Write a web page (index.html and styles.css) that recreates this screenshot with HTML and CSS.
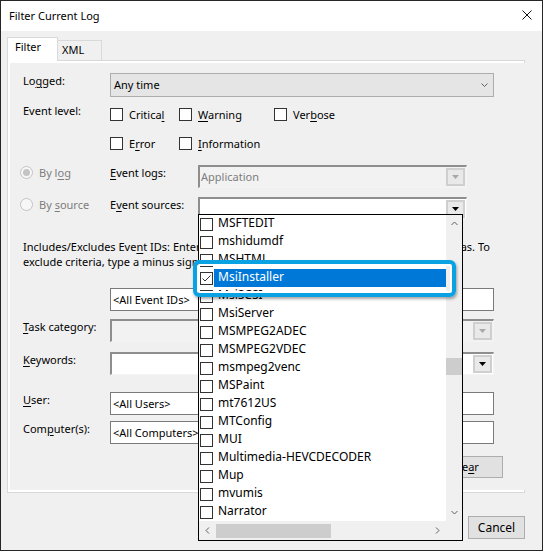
FILE: index.html
```html
<!DOCTYPE html>
<html>
<head>
<meta charset="utf-8">
<title>Filter Current Log</title>
<link rel="stylesheet" href="styles.css">
</head>
<body>
<div class="window">
  <div class="titlebar">
    <span class="title">Filter Current Log</span>
    <svg class="close" width="10" height="10" viewBox="0 0 10 10"><path d="M0.5 0.5L9.5 9.5M9.5 0.5L0.5 9.5" stroke="#111" stroke-width="1" fill="none"/></svg>
  </div>
  <div class="client">
    <div class="tabs">
      <div class="tab tab-active">Filter</div>
      <div class="tab tab-xml">XML</div>
    </div>
    <div class="page">
      <div class="panel">
        <div class="row row-logged">
          <div class="label">Lo<u>g</u>ged:</div>
          <div class="select"><span class="select-text">Any time</span>
            <svg class="chev" width="7" height="5" viewBox="0 0 7 5"><path d="M0.5 0.5L3.5 3.5L6.5 0.5" stroke="#606060" fill="none"/></svg>
          </div>
        </div>
        <div class="row row-level1">
          <div class="label">Event level:</div>
          <div class="checks">
            <div class="check w1"><span class="box"></span><span>Critica<u>l</u></span></div>
            <div class="check w2"><span class="box"></span><span><u>W</u>arning</span></div>
            <div class="check"><span class="box"></span><span>Ver<u>b</u>ose</span></div>
          </div>
        </div>
        <div class="row row-level2">
          <div class="checks indent">
            <div class="check w1"><span class="box"></span><span>E<u>r</u>ror</span></div>
            <div class="check w2"><span class="box"></span><span><u>I</u>nformation</span></div>
          </div>
        </div>
        <div class="row row-bylog">
          <div class="radio-group"><span class="radio on"></span><span class="dim">By l<u>o</u>g</span></div>
          <div class="label2"><u>E</u>vent logs:</div>
          <div class="combo combo-disabled"><span class="combo-text dim">Application</span>
            <span class="cbtn"><svg width="7" height="4" viewBox="0 0 7 4"><path d="M0 0H7L3.5 4Z" fill="#a8a8a8"/></svg></span>
          </div>
        </div>
        <div class="row row-bysource">
          <div class="radio-group"><span class="radio"></span><span class="dim">By <u>s</u>ource</span></div>
          <div class="label2">E<u>v</u>ent sources:</div>
          <div class="combo"><span class="combo-text"></span>
            <span class="cbtn"><svg width="7" height="4" viewBox="0 0 7 4"><path d="M0 0H7L3.5 4Z" fill="#000"/></svg></span>
          </div>
        </div>
        <div class="desc">Includes/Excludes Eve<u>n</u>t IDs: Enter ID numbers and/or ID ranges separated by commas. To<br>exclude criteria, type a minus sign first. For example 1,3,5-99,-76</div>
        <div class="row row-ids">
          <div class="label"></div>
          <div class="input">&lt;All Event IDs&gt;</div>
        </div>
        <div class="row row-task">
          <div class="label"><u>T</u>ask category:</div>
          <div class="combo combo-wide combo-disabled"><span class="combo-text"></span>
            <span class="cbtn"><svg width="7" height="4" viewBox="0 0 7 4"><path d="M0 0H7L3.5 4Z" fill="#a8a8a8"/></svg></span>
          </div>
        </div>
        <div class="row row-keys">
          <div class="label"><u>K</u>eywords:</div>
          <div class="combo combo-wide"><span class="combo-text"></span>
            <span class="cbtn"><svg width="7" height="4" viewBox="0 0 7 4"><path d="M0 0H7L3.5 4Z" fill="#000"/></svg></span>
          </div>
        </div>
        <div class="row row-user">
          <div class="label"><u>U</u>ser:</div>
          <div class="input">&lt;All Users&gt;</div>
        </div>
        <div class="row row-comp">
          <div class="label">Com<u>p</u>uter(s):</div>
          <div class="input">&lt;All Computers&gt;</div>
        </div>
        <div class="row row-clear">
          <div class="btn btn-clear">Cle<u>a</u>r</div>
        </div>
      </div>
    </div>
    <div class="buttons">
      <div class="btn btn-ok">OK</div>
      <div class="btn btn-cancel">Cancel</div>
    </div>
  </div>

  <div class="dropdown">
    <div class="items">
      <div class="item"><span class="cb"></span><span class="txt">MSFTEDIT</span></div>
      <div class="item"><span class="cb"></span><span class="txt">mshidumdf</span></div>
      <div class="item"><span class="cb"></span><span class="txt">MSHTML</span></div>
      <div class="item item-sel"><span class="cb"><svg width="11" height="11" viewBox="0 0 11 11"><path d="M1.5 5.5L4 8L9.5 2.5" stroke="#333" fill="none"/></svg></span><span class="txt">MsiInstaller</span></div>
      <div class="item"><span class="cb"></span><span class="txt">MsiSCSI</span></div>
      <div class="item"><span class="cb"></span><span class="txt">MsiServer</span></div>
      <div class="item"><span class="cb"></span><span class="txt">MSMPEG2ADEC</span></div>
      <div class="item"><span class="cb"></span><span class="txt">MSMPEG2VDEC</span></div>
      <div class="item"><span class="cb"></span><span class="txt">msmpeg2venc</span></div>
      <div class="item"><span class="cb"></span><span class="txt">MSPaint</span></div>
      <div class="item"><span class="cb"></span><span class="txt">mt7612US</span></div>
      <div class="item"><span class="cb"></span><span class="txt">MTConfig</span></div>
      <div class="item"><span class="cb"></span><span class="txt">MUI</span></div>
      <div class="item"><span class="cb"></span><span class="txt">Multimedia-HEVCDECODER</span></div>
      <div class="item"><span class="cb"></span><span class="txt">Mup</span></div>
      <div class="item"><span class="cb"></span><span class="txt">mvumis</span></div>
      <div class="item"><span class="cb"></span><span class="txt">Narrator</span></div>
    </div>
    <div class="vscroll">
      <div class="sbtn"><svg width="7" height="5" viewBox="0 0 7 5"><path d="M0.5 4L3.5 1L6.5 4" stroke="#606060" fill="none"/></svg></div>
      <div class="vtrack"><div class="vthumb"></div></div>
      <div class="sbtn"><svg width="7" height="5" viewBox="0 0 7 5"><path d="M0.5 1L3.5 4L6.5 1" stroke="#606060" fill="none"/></svg></div>
    </div>
    <div class="hscroll">
      <div class="sbtn"><svg width="5" height="7" viewBox="0 0 5 7"><path d="M4 0.5L1 3.5L4 6.5" stroke="#606060" fill="none"/></svg></div>
      <div class="htrack"><div class="hthumb"></div></div>
      <div class="sbtn"><svg width="5" height="7" viewBox="0 0 5 7"><path d="M1 0.5L4 3.5L1 6.5" stroke="#606060" fill="none"/></svg></div>
    </div>
    <div class="corner"></div>
  </div>
  <div class="callout"></div>
</div>
</body>
</html>
```
FILE: styles.css
```css
* { box-sizing: border-box; }
html, body { margin: 0; padding: 0; }
body {
  width: 543px; height: 551px; overflow: hidden;
  font-family: "Noto Sans", "Segoe UI", sans-serif;
  font-size: 11px; color: #000; background: #fff;
}
u { text-decoration: underline; text-underline-offset: 2px; }

.window {
  position: relative;
  width: 543px; height: 551px;
  border: 1px solid #262626;
  background: #f0f0f0;
  display: flex; flex-direction: column;
}
.titlebar {
  height: 30px; background: #fff;
  display: flex; align-items: flex-start;
  padding: 7px 0 0 8px;
}
.title { flex: 1; line-height: 16px; }
.close { margin: 2px 10px 0 0; }

.client { flex: 1; display: flex; flex-direction: column; padding: 6px 17px 0 6px; }

.tabs { display: flex; align-items: flex-end; height: 24px; margin-bottom: -1px; position: relative; z-index: 1; }
.tab { border: 1px solid #d9d9d9; line-height: 16px; }
.tab-active { width: 51px; height: 24px; background: #fff; border-bottom: none; padding: 1px 0 0 7px; }
.tab-xml { width: 44px; height: 21px; background: #f0f0f0; border-left: none; padding: 1px 0 0 4px; }

.page {
  width: 518px; height: 433px;
  border: 1px solid #d9d9d9; background: #fff;
  padding: 2px; display: flex;
}
.panel {
  flex: 1; background: #f0f0f0;
  padding: 10px 28px 0 13px;
  display: flex; flex-direction: column;
}
.row { display: flex; align-items: flex-start; }
.label { width: 87px; line-height: 15px; flex: none; }
.label2 { width: 88px; line-height: 15px; flex: none; }

.select {
  width: 384px; height: 24px;
  border: 1px solid #adadad; background: #e5e5e5;
  display: flex; align-items: center; justify-content: space-between;
  padding: 0 5px 0 3px;
}
.select-text { line-height: 20px; }

.row-level1 { margin-top: 6px; }
.checks { display: flex; margin-top: 3px; height: 17px; }
.checks.indent { margin: 0 0 0 87px; }
.check { display: flex; align-items: center; height: 17px; gap: 6px; line-height: 17px; }
.check.w1 { width: 69px; }
.check.w2 { width: 95px; }
.box { width: 13px; height: 13px; border: 1px solid #333; background: #fff; flex: none; }
.row-level2 { margin-top: 12px; }

.row-bylog { margin-top: 13px; height: 23px; }
.row-bysource { margin-top: 9px; height: 22px; }
.radio-group { width: 90px; margin-left: -3px; display: flex; align-items: flex-start; gap: 6px; line-height: 15px; }
.radio { width: 13px; height: 13px; border: 1px solid #c4c4c4; border-radius: 50%; margin-top: 1px; background: #f7f7f7; position: relative; flex: none; }
.radio.on::after { content: ""; position: absolute; left: 2px; top: 2px; width: 7px; height: 7px; border-radius: 50%; background: #c4c4c4; }
.dim { color: #7d7d7d; }

.combo {
  width: 269px; height: 100%;
  border-style: solid; border-width: 2px 1px 1px 2px;
  border-color: #8e8e8e #f4f4f4 #f4f4f4 #8e8e8e;
  background: #fff;
  display: flex; align-items: flex-start;
}
.combo-disabled { background: #f2f2f2; }
.combo-wide { width: 384px; height: 23px; }
.combo-text { flex: 1; padding-left: 1px; line-height: 19px; }
.cbtn {
  width: 19px; height: 18px; margin: 1px 1px 0 0;
  border: 2px solid #cfcfcf; background: #e9e9e9;
  display: flex; align-items: center; justify-content: center;
  flex: none;
}

.desc { margin-top: 20px; line-height: 15px; white-space: nowrap; }
.row-ids { margin-top: 19px; }
.input {
  width: 384px; height: 23px;
  border: 1px solid #7a7a7a; background: #fff;
  padding-left: 2px; line-height: 21px;
}
.row-task { margin-top: 8px; }
.row-keys { margin-top: 10px; }
.row-user { margin-top: 17px; }
.row-comp { margin-top: 6px; }
.row-clear { margin-top: 12px; }

.btn {
  height: 22px; border: 1px solid #adadad; background: #e1e1e1;
  display: flex; align-items: center; justify-content: center;
  line-height: 16px;
}
.btn-clear { width: 75px; margin-left: 405px; }
.buttons { display: flex; justify-content: flex-end; gap: 8px; margin-top: 23px; }
.btn-ok, .btn-cancel { width: 57px; height: 23px; font-size: 12px; }

.dropdown {
  position: absolute; left: 197px; top: 213px;
  width: 265px; height: 327px;
  border: 1px solid #000; background: #fff;
  display: grid;
  grid-template-columns: 247px 16px;
  grid-template-rows: 306px 19px;
  z-index: 5;
  font-size: 12px;
}
.items { overflow: hidden; }
.item { height: 18px; display: flex; align-items: flex-start; }
.cb { width: 13px; height: 13px; border: 1px solid #333; margin: 3px 0 0 1px; flex: none; display: flex; align-items: center; justify-content: center; }
.txt { flex: 1; height: 18px; margin-left: 1px; padding-left: 4px; line-height: 16px; white-space: nowrap; }
.item-sel .txt { background: #0078d7; color: #fff; }

.vscroll { background: #f0f0f0; display: flex; flex-direction: column; }
.sbtn { width: 16px; height: 17px; display: flex; align-items: center; justify-content: center; flex: none; }
.vtrack { flex: 1; }
.vthumb { height: 17px; margin-top: 126px; background: #cdcdcd; }
.hscroll { background: #f0f0f0; display: flex; align-items: center; }
.hscroll .sbtn { width: 17px; height: 19px; }
.htrack { flex: 1; height: 19px; padding-top: 3px; }
.hthumb { width: 115px; height: 14px; background: #cdcdcd; }
.corner { background: #f0f0f0; }

.callout {
  position: absolute; left: 192px; top: 259px;
  width: 263px; height: 37px;
  border: 4px solid #0aa2e2; border-radius: 6px;
  box-shadow: inset 0 0 0 2px #fff, 1px 2px 3px rgba(0,0,0,0.35);
  z-index: 6;
}
```
